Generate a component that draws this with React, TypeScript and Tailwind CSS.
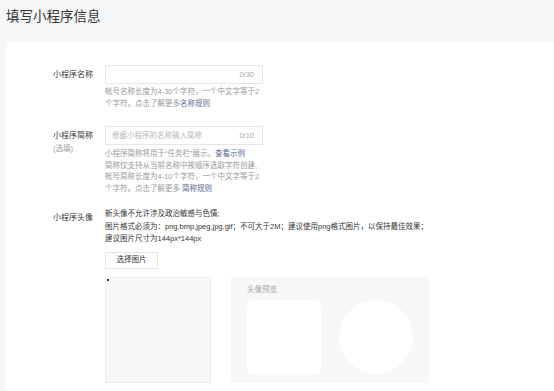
import React from "react";

const font = { fontFamily: '"Liberation Sans", "Noto Sans CJK SC", sans-serif' };

function Label({ children, sub }: { children: React.ReactNode; sub?: string }) {
  return (
    <div className="w-[52px] shrink-0 text-[8px] leading-[11px] text-[#353535]">
      <div className="flex h-[19px] items-center">{children}</div>
      {sub && <div className="-mt-[2px] text-[7.5px] text-[#9a9a9a]">{sub}</div>}
    </div>
  );
}

function TextInput({ placeholder, counter }: { placeholder?: string; counter: string }) {
  return (
    <div className="flex h-[19px] w-[158px] items-center justify-between border border-[#e7e7eb] bg-white pl-[6px] pr-[8px] text-[7.5px]">
      <span className="text-[#b8b8b8]">{placeholder}</span>
      <span className="text-[#a8a8a8]">{counter}</span>
    </div>
  );
}

export default function App() {
  return (
    <div className="min-h-[391px] w-full bg-[#f5f6f8] pl-[6px]" style={font}>
      <div className="h-[42px] pt-[8px] text-[13.5px] leading-[18px] text-[#353535]">填写小程序信息</div>

      <div className="min-h-[349px] bg-white pl-[47px] pt-[23px]">
        {/* 名称 */}
        <div className="flex">
          <Label>小程序名称</Label>
          <div>
            <TextInput counter="0/30" />
            <p className="mt-[2px] text-[7.5px] leading-[12px] text-[#9a9a9a]">
              帐号名称长度为4-30个字符，一个中文字等于2
              <br />
              个字符。点击了解更多<span className="text-[#576b95]">名称规则</span>
            </p>
          </div>
        </div>

        {/* 简称 */}
        <div className="mt-[16px] flex">
          <Label sub="(选填)">小程序简称</Label>
          <div>
            <TextInput placeholder="根据小程序的名称输入简称" counter="0/10" />
            <p className="mt-[3px] text-[7.5px] leading-[11.5px] text-[#9a9a9a]">
              小程序简称将用于“任务栏”展示。<span className="text-[#576b95]">查看示例</span>
              <br />
              简称仅支持从当前名称中按顺序选取字符创建,
              <br />
              帐号简称长度为4-10个字符，一个中文字等于2
              <br />
              个字符。点击了解更多 <span className="text-[#576b95]">简称规则</span>
            </p>
          </div>
        </div>

        {/* 头像 */}
        <div className="mt-[14px] flex">
          <div className="w-[52px] shrink-0 pt-[4px] text-[8px] leading-[12.5px] text-[#353535]">小程序头像</div>
          <div>
            <p className="text-[7.5px] leading-[12.5px] text-[#353535]">
              新头像不允许涉及政治敏感与色情;
              <br />
              图片格式必须为：png,bmp,jpeg,jpg,gif；不可大于2M；建议使用png格式图片，以保持最佳效果；
              <br />
              建议图片尺寸为144px*144px
            </p>
            <button className="mt-[6px] flex h-[17px] w-[53px] items-center justify-center border border-[#e4e6e9] bg-white text-[7.5px] text-[#353535]">
              选择图片
            </button>
            <div className="mt-[8px] flex gap-[20px]">
              <div className="relative h-[106px] w-[106px] border border-[#ebedf0] bg-[#f6f7f9]">
                <div className="absolute left-[1px] top-[1px] h-[2px] w-[2px] bg-[#333]" />
              </div>
              <div className="h-[106px] w-[198px] bg-[#f6f7f9] pl-[16px] pt-[8px]">
                <div className="text-[7.5px] leading-[10px] text-[#a8a8a8]">头像预览</div>
                <div className="mt-[5px] flex gap-[18px]">
                  <div className="h-[74px] w-[74px] rounded-[6px] bg-white" />
                  <div className="h-[74px] w-[74px] rounded-full bg-white" />
                </div>
              </div>
            </div>
          </div>
        </div>
      </div>
    </div>
  );
}
